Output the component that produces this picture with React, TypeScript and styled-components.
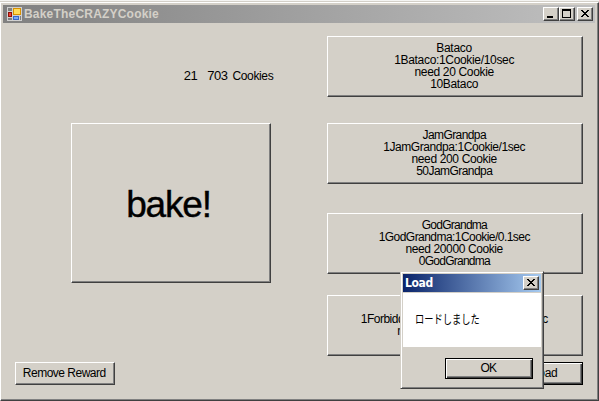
import React from 'react';
import styled, { createGlobalStyle, css } from 'styled-components';

const FACE = '#d4d0c8';

const GlobalStyle = createGlobalStyle`
  *, *::before, *::after { box-sizing: border-box; }
  body { margin: 0; background: ${FACE}; overflow: hidden; }
`;

const raised = css`
  background: ${FACE};
  border: 1px solid;
  border-color: #fff #404040 #404040 #fff;
  box-shadow: inset -1px -1px 0 #808080;
`;

const Desktop = styled.div`
  position: relative;
  width: 599px;
  height: 401px;
  padding-top: 1px;
  border-top: 1px solid #f4f4f2;
  font: 12px/12px "Liberation Sans", "Noto Sans CJK JP", sans-serif;
  color: #000;
`;

const Window = styled.main`
  ${raised}
  width: 599px;
  height: 399px;
  padding: 2px 3px 2px 2px;
  display: flex;
  flex-direction: column;
`;

const TitleBar = styled.header<{ $active?: boolean }>`
  display: flex;
  align-items: center;
  flex: none;
  height: 18px;
  padding: 0 2px;
  background: ${p => p.$active
    ? 'linear-gradient(90deg, #0a246a, #a6caf0)'
    : 'linear-gradient(90deg, #808080, #c0c0c0)'};
`;

const Title = styled.h1<{ $color: string; $spacing?: number }>`
  flex: 1;
  margin: 0;
  font: bold 12px/16px "Liberation Sans", sans-serif;
  letter-spacing: ${p => p.$spacing || 0}px;
  color: ${p => p.$color};
  white-space: pre;
`;

const DialogTitle = styled(Title)`
  font: bold 12px/16px "DejaVu Sans Condensed", "DejaVu Sans", sans-serif;
`;

const AppIcon = styled.svg`
  flex: none;
  width: 16px;
  height: 16px;
  margin: 0 1px 0 2px;
`;

const CaptionButton = styled.button<{ $gap?: boolean }>`
  ${raised}
  flex: none;
  width: 16px;
  height: 14px;
  margin: 0 0 0 ${p => (p.$gap ? 2 : 0)}px;
  padding: 0;
  display: flex;

  svg { display: block; width: 14px; height: 12px; }
`;

const Client = styled.div`
  flex: 1;
  display: grid;
  grid-template-columns: 200px 256px;
  column-gap: 56px;
  padding: 13px 0 0 68px;
  min-height: 0;
`;

const LeftColumn = styled.section`
  display: flex;
  flex-direction: column;
`;

const Counter = styled.div`
  display: flex;
  justify-content: flex-end;
  align-items: baseline;
  height: 87px;
  padding-top: 34px;
  margin-right: -2px;
`;

const Label = styled.span<{ $spacing?: number }>`
  letter-spacing: ${p => p.$spacing || 0}px;
  margin-right: ${p => p.$spacing || 0}px;
  white-space: pre;
`;

const Digits = styled.span<{ $right: number }>`
  font-size: 13px;
  letter-spacing: -0.5px;
  margin-right: ${p => p.$right}px;
`;

const PushButton = styled.button<{ $w: number; $h: number; $default?: boolean }>`
  ${raised}
  width: ${p => p.$w}px;
  height: ${p => p.$h}px;
  padding: 0 2px 2px 0;
  display: flex;
  align-items: center;
  justify-content: center;
  font: inherit;
  color: inherit;
  white-space: pre;
  ${p => p.$default && css`
    border-color: #000;
    box-shadow: inset 1px 1px 0 #fff, inset -1px -1px 0 #404040, inset -2px -2px 0 #808080;
  `}
`;

const BakeText = styled.span`
  font-size: 37px;
  line-height: 40px;
  letter-spacing: -1.2px;
  padding-top: 5px;
  margin-right: 3px;
  -webkit-text-stroke: 0.4px #000;
`;

const Shop = styled.section`
  display: flex;
  flex-direction: column;
`;

const ShopButton = styled(PushButton)<{ $gap: number }>`
  flex: none;
  flex-direction: column;
  margin-bottom: ${p => p.$gap}px;
`;

const Footer = styled.footer`
  display: flex;
  justify-content: space-between;
  height: 36px;
  padding: 0 12px;
  flex: none;
`;

const Dialog = styled.div`
  position: absolute;
  left: 400px;
  top: 270px;
  width: 144px;
  height: 118px;
  padding: 2px;
  background: ${FACE};
  border: 1px solid;
  border-color: ${FACE} #404040 #404040 ${FACE};
  box-shadow: inset 1px 1px 0 #fff, inset -1px -1px 0 #808080;
`;

const Message = styled.div`
  height: 54px;
  margin-top: 1px;
  padding: 20px 0 0 12px;
  background: #fff;
`;

const Narrow = styled.span`
  display: inline-block;
  font-family: "Noto Sans CJK JP", sans-serif;
  transform: scaleX(0.77);
  transform-origin: left;
  white-space: pre;
`;

const DialogActions = styled.div`
  display: flex;
  padding: 11px 0 0 42px;
`;

type Line = [text: string, spacing: number];

const items: { gap: number; lines: Line[] }[] = [
  { gap: 26, lines: [['Bataco', -0.25], ['1Bataco:1Cookie/10sec', -0.33], ['need 20 Cookie', -0.33], ['10Bataco', -0.35]] },
  { gap: 29, lines: [['JamGrandpa', -0.6], ['1JamGrandpa:1Cookie/1sec', -0.42], ['need 200 Cookie', -0.35], ['50JamGrandpa', -0.55]] },
  { gap: 21, lines: [['GodGrandma', -0.75], ['1GodGrandma:1Cookie/0.1sec', -0.55], ['need 20000 Cookie', -0.4], ['0GodGrandma', -0.75]] },
  { gap: 0, lines: [[' ', 0], ['1ForbiddenGrandma:1Cookie/0.01sec', -0.5], ['need 2000000 Cookie', -0.2], [' ', 0]] },
];

const CloseGlyph = () => (
  <svg viewBox="0 0 14 12" shapeRendering="crispEdges">
    <path d="M3 2h2v1h1v1h2v-1h1v-1h2v1h-1v1h-1v1h-1v1h1v1h1v1h1v1h-2v-1h-1v-1h-2v1h-1v1h-2v-1h1v-1h1v-1h1v-1h-1v-1h-1v-1h-1z" />
  </svg>
);

export default function App() {
  return (
    <Desktop>
      <GlobalStyle />
      <Window>
        <TitleBar>
          <AppIcon viewBox="0 0 16 16" shapeRendering="crispEdges">
            <path fill="#d0d0d0" d="M0 1h15v14H0z" />
            <path fill="#808080" d="M1 2h4v3H1zM1 12h4v2H1zM13 10h1v4h-1z" />
            <path fill="#901008" d="M1 6h4v5H1z" /><path fill="#f04030" d="M2 7h2v3H2z" />
            <path fill="#d89000" d="M6 2h8v7H6z" /><path fill="#ffdc58" d="M7 3h6v5H7z" />
            <path fill="#3868c8" d="M6 10h6v4H6z" /><path fill="#78a8f8" d="M7 11h4v2H7z" />
          </AppIcon>
          <Title $color={FACE} $spacing={0.2}>BakeTheCRAZYCookie</Title>
          <CaptionButton aria-label="Minimize">
            <svg viewBox="0 0 14 12"><path d="M3 8h6v2H3z" /></svg>
          </CaptionButton>
          <CaptionButton aria-label="Maximize">
            <svg viewBox="0 0 14 12"><path fillRule="evenodd" d="M2 1h9v9H2zM3 3v6h7V3z" /></svg>
          </CaptionButton>
          <CaptionButton $gap aria-label="Close"><CloseGlyph /></CaptionButton>
        </TitleBar>
        <Client>
          <LeftColumn>
            <Counter>
              <Digits $right={10}>21</Digits>
              <Digits $right={5}>703</Digits>
              <Label $spacing={-0.35}>Cookies</Label>
            </Counter>
            <PushButton $w={200} $h={160}><BakeText>bake!</BakeText></PushButton>
          </LeftColumn>
          <Shop>
            {items.map((item, i) => (
              <ShopButton key={i} $w={256} $h={61} $gap={item.gap}>
                {item.lines.map(([text, spacing], j) => <Label key={j} $spacing={spacing}>{text}</Label>)}
              </ShopButton>
            ))}
          </Shop>
        </Client>
        <Footer>
          <PushButton $w={100} $h={23}><Label $spacing={-0.5}>Remove Reward</Label></PushButton>
          <PushButton $w={75} $h={23} $default><Label $spacing={-0.3}>Load</Label></PushButton>
        </Footer>
      </Window>
      <Dialog role="dialog" aria-label="Load">
        <TitleBar $active>
          <DialogTitle as="h2" $color="#fff" $spacing={-0.4}>Load</DialogTitle>
          <CaptionButton aria-label="Close"><CloseGlyph /></CaptionButton>
        </TitleBar>
        <Message><Narrow>ロードしました</Narrow></Message>
        <DialogActions><PushButton $w={88} $h={21} $default><Label $spacing={-0.8}>OK</Label></PushButton></DialogActions>
      </Dialog>
    </Desktop>
  );
}
